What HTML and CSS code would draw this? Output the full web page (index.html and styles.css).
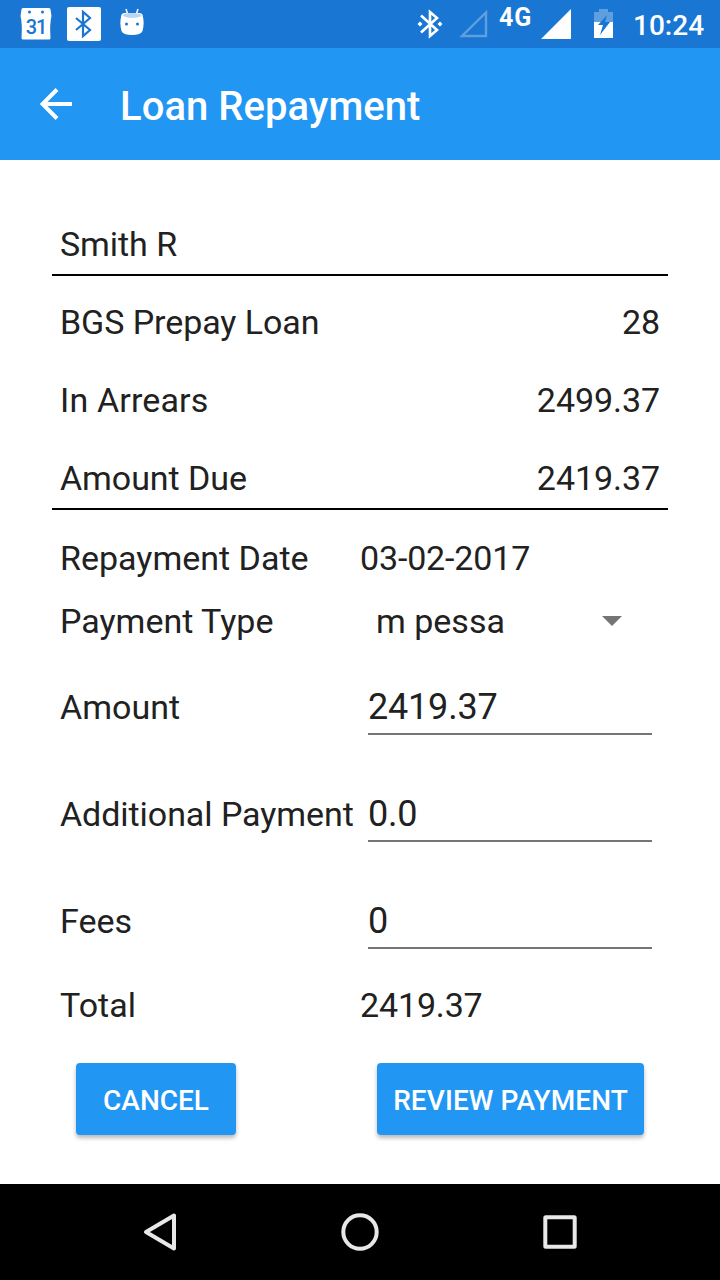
FILE: index.html
```html
<!DOCTYPE html>
<html lang="en">
<head>
<meta charset="utf-8">
<title>Loan Repayment</title>
<link rel="stylesheet" href="styles.css">
</head>
<body>
<header class="status-bar">
  <div class="status-group">
    <div class="calendar-icon">
      <svg width="32" height="34" viewBox="0 0 32 34"><path fill="#fff" fill-rule="evenodd" d="M3 1H29Q30.500 1 30.500 2.500L31.500 9Q29.500 17 30.500 31Q30.500 32.500 29 32.500H3Q1.500 32.500 1.500 31Q2.500 17 .5 9L1.500 2.500Q1.500 1 3 1ZM9.500 3.500a1.500 1.500 0 1 0 0 3a1.500 1.500 0 1 0 0-3ZM22.500 3.500a1.500 1.500 0 1 0 0 3a1.500 1.500 0 1 0 0-3Z"/></svg>
      <span class="calendar-day">31</span>
    </div>
    <svg class="bt-box-icon" width="34" height="34" viewBox="0 0 34 34"><rect width="34" height="34" rx="2" fill="#fff"/><path d="M9 11L23 23L16 29V5L23 11L9 23" fill="none" stroke="#1976d2" stroke-width="2.200"/></svg>
    <svg class="android-icon" width="24" height="30" viewBox="0 0 24 30"><path d="M6 2L8 8M18 2L16 8" stroke="#fff" stroke-width="1.500"/><path d="M1 10Q1 6 5 6H19Q23 6 23 10Q24.500 17 22.500 24Q21 28 12 28Q3 28 1.500 24Q-.5 17 1 10Z" fill="#fff"/><path d="M4 7Q12 5 20 7L22 9Q12 13 3 9Z" fill="#bbd6f2"/><circle cx="6.500" cy="17" r="1.500" fill="#1976d2"/><circle cx="17.500" cy="17" r="1.500" fill="#1976d2"/></svg>
  </div>
  <div class="status-group">
    <svg class="bt-icon" width="26" height="30" viewBox="0 0 26 30"><path d="M4 6.500L20 21L13 27V3L20 9L4 23.500" fill="none" stroke="#fff" stroke-width="2.600"/><path d="M3 12.500L5.500 15L3 17.500L.5 15ZM23 12.500L25.500 15L23 17.500L20.500 15Z" fill="#fff"/></svg>
    <svg class="signal-empty" width="29" height="29" viewBox="0 0 29 29"><path d="M3 26H27V2.500Z" fill="none" stroke="#5e9fe0" stroke-width="2.400"/></svg>
    <span class="network">4G</span>
    <svg class="signal-full" width="30" height="30" viewBox="0 0 30 30"><path d="M0 30H30V0Z" fill="#fff"/></svg>
    <svg class="battery-icon" width="20" height="29" viewBox="0 0 20 29"><path d="M5 0H14V3H19V13H0V3H5Z" fill="#5e9fe0"/><path d="M0 13H19V29H0Z" fill="#fff"/><path d="M13 6L4 16H9L6 26L16 13H11Z" fill="#1976d2"/></svg>
    <span class="clock">10:24</span>
  </div>
</header>
<div class="toolbar">
  <svg width="32" height="32" viewBox="0 0 32 32"><path d="M32 16H4M17 1.500L2.500 16L17 30.500" fill="none" stroke="#fff" stroke-width="4"/></svg>
  <h1 class="title">Loan Repayment</h1>
</div>
<main class="content">
  <section class="summary client"><div class="row"><span>Smith R</span></div></section>
  <section class="summary loan">
    <div class="row"><span>BGS Prepay Loan</span><span>28</span></div>
    <div class="row"><span class="arrears">In Arrears</span><span>2499.37</span></div>
    <div class="row"><span>Amount Due</span><span>2419.37</span></div>
  </section>
  <section class="form">
    <div class="field date"><span>Repayment Date</span><span class="value">03-02-2017</span></div>
    <div class="field type"><span>Payment Type</span><div class="select"><span>m pessa</span><svg width="20" height="10" viewBox="0 0 20 10"><path d="M0 0H20L10 10Z" fill="#757575"/></svg></div></div>
    <div class="field entry"><span>Amount</span><div class="input">2419.37</div></div>
    <div class="field entry"><span class="additional">Additional Payment</span><div class="input">0.0</div></div>
    <div class="field entry"><span>Fees</span><div class="input">0</div></div>
    <div class="field total"><span>Total</span><span class="value">2419.37</span></div>
  </section>
  <div class="actions">
    <button class="btn cancel">CANCEL</button>
    <button class="btn review">REVIEW PAYMENT</button>
  </div>
</main>
<nav class="nav-bar">
  <svg width="40" height="40" viewBox="0 0 40 40"><path d="M6 20L34 3.500V36.500Z"/></svg>
  <svg width="40" height="40" viewBox="0 0 40 40"><circle cx="20" cy="20" r="16.700"/></svg>
  <svg width="40" height="40" viewBox="0 0 40 40"><rect x="5.300" y="5.300" width="29.400" height="29.400" rx=".5"/></svg>
</nav>
</body>
</html>
```

FILE: styles.css
```css
* { box-sizing: border-box; }
body {
  margin: 0;
  height: 1280px;
  display: flex;
  flex-direction: column;
  background: #fff;
  color: #212121;
  font: 34px/40px Roboto, sans-serif;
}
svg { display: block; flex: none; }
.status-bar {
  height: 48px;
  flex: none;
  display: flex;
  justify-content: space-between;
  padding: 0 16px 0 20px;
  background: #1976d2;
  color: #fff;
}
.status-group { display: flex; align-items: flex-start; }
.calendar-icon { position: relative; margin-top: 7px; }
.calendar-day {
  position: absolute;
  left: 0;
  top: 9px;
  width: 32px;
  text-align: center;
  font-size: 20px;
  line-height: 22px;
  font-weight: 500;
  letter-spacing: -1px;
  color: #1976d2;
}
.bt-box-icon { margin: 7px 0 0 15px; }
.android-icon { margin: 7px 0 0 19px; }
.bt-icon { margin: 9px 16px 0 0; }
.signal-empty { margin: 10px 11px 0 0; }
.network {
  width: 42px;
  margin-top: 4px;
  font-size: 25px;
  line-height: 28px;
  font-weight: 700;
  letter-spacing: 1px;
}
.signal-full { margin-top: 9px; }
.battery-icon { margin: 9px 19px 0 23px; }
.clock { margin-top: 9px; width: 71px; font-size: 28px; line-height: 33px; font-weight: 500; }
.toolbar {
  height: 112px;
  flex: none;
  display: flex;
  align-items: center;
  gap: 48px;
  padding: 0 40px;
  background: #2196f3;
  color: #fff;
}
.title { margin: 6px 0 0; font-size: 40px; line-height: 48px; font-weight: 500; letter-spacing: .04px; }
.content { flex: 1; padding: 64px 52px 0; }
.summary { padding: 0 8px 8px; border-bottom: 2px solid #000; }
.client { padding-bottom: 10px; }
.loan { display: grid; gap: 38px; padding-top: 26px; padding-bottom: 10px; }
.row { display: flex; justify-content: space-between; letter-spacing: -.07px; }
.arrears { letter-spacing: .15px; }
.form { padding: 28px 16px 0 8px; }
.field { display: grid; grid-template-columns: 300px 1fr; height: 40px; white-space: nowrap; }
.value { letter-spacing: -.15px; }
.additional { letter-spacing: -.06px; }
.type { margin: 23px 0 46px; }
.select { display: flex; justify-content: space-between; align-items: center; padding: 0 30px 0 16px; }
.entry { height: 48px; margin-bottom: 59px; }
.input { margin-left: 8px; font-size: 36px; letter-spacing: -.2px; border-bottom: 2px solid #757575; }
.total { margin-top: -23px; }
.actions { display: flex; justify-content: space-between; padding: 38px 24px 0; }
.btn {
  height: 72px;
  padding: 2px 0 0;
  border: 0;
  border-radius: 4px;
  background: #2196f3;
  color: #fff;
  font: 500 28px/33px Roboto, sans-serif;
  box-shadow: 0 3px 4px rgba(0, 0, 0, .28);
}
.cancel { width: 160px; }
.review { width: 267px; letter-spacing: .08px; }
.nav-bar {
  height: 96px;
  flex: none;
  display: flex;
  justify-content: space-between;
  align-items: center;
  padding: 0 140px;
  background: #000;
  fill: none;
  stroke: #e8e8e8;
  stroke-width: 4;
  stroke-linejoin: round;
}
```
